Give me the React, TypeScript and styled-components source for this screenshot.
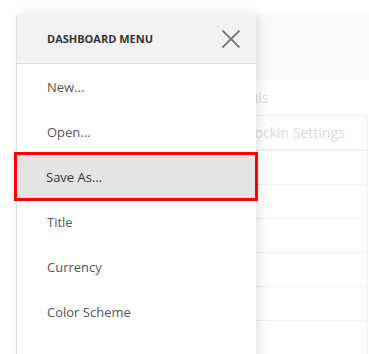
import React from 'react';
import styled, { createGlobalStyle } from 'styled-components';

const GlobalStyle = createGlobalStyle`
  html, body {
    margin: 0;
    padding: 0;
    background: #fff;
    font-family: 'Open Sans', 'Noto Sans', sans-serif;
  }
`;

const Page = styled.div`
  position: relative;
  width: 369px;
  height: 354px;
  overflow: hidden;
  padding-top: 14px;
  box-sizing: border-box;
`;

const Backdrop = styled.div`
  display: flex;
  flex-direction: column;
  padding-left: 120px;
`;

const TopBar = styled.div`
  height: 66px;
  background: #f9f9f9;
`;

const SectionLabel = styled.div`
  height: 35px;
  display: flex;
  align-items: center;
  font-size: 14px;
  color: #d9d9d9;
  padding-left: 104px;
`;

const Grid = styled.div`
  border-top: 1px solid #f0f0f0;
  border-right: 1px solid #f0f0f0;
  margin-right: 1px;
`;

const GridRow = styled.div<{ $head?: boolean }>`
  height: 33px;
  border-bottom: ${({ $head }) => ($head ? '2px' : '1px')} solid #f0f0f0;
  display: flex;
  align-items: center;
  font-size: 14px;
  color: #d9d9d9;
  padding-left: 122px;
  white-space: nowrap;
`;

const Menu = styled.div`
  position: absolute;
  left: 16px;
  top: 14px;
  width: 239px;
  height: 360px;
  background: #fff;
  border-left: 1px solid #ddd;
  border-top-left-radius: 4px;
  border-top-right-radius: 4px;
  box-shadow: 3px 0 10px rgba(0, 0, 0, 0.1);
`;

const MenuHeader = styled.div`
  height: 49px;
  background: #f2f2f2;
  border-bottom: 1px solid #ddd;
  border-top-left-radius: 4px;
  border-top-right-radius: 4px;
  display: flex;
  align-items: center;
  justify-content: space-between;
  padding: 0 14px 0 30px;
`;

const MenuTitle = styled.span`
  font-size: 11px;
  font-weight: 700;
  color: #333;
`;

const CloseButton = styled.button`
  border: 0;
  background: none;
  padding: 0;
  width: 22px;
  height: 20px;
  display: flex;
  align-items: center;
  justify-content: center;
  cursor: pointer;
`;

const MenuList = styled.ul`
  list-style: none;
  margin: 0;
  padding: 0;
`;

const MenuItem = styled.li<{ $active?: boolean }>`
  height: 45px;
  display: flex;
  align-items: center;
  padding-left: 30px;
  font-size: 13px;
  color: ${({ $active }) => ($active ? '#333' : '#555')};
  background: ${({ $active }) => ($active ? '#e4e4e4' : 'transparent')};
  outline: ${({ $active }) => ($active ? '3px solid #ff0000' : 'none')};
  outline-offset: -1px;
  margin-left: ${({ $active }) => ($active ? '-1px' : '0')};
  position: relative;
`;

const items = ['New...', 'Open...', 'Save As...', 'Title', 'Currency', 'Color Scheme'];

const App = () => (
  <>
    <GlobalStyle />
    <Page>
      <Backdrop>
        <TopBar />
        <SectionLabel>Details</SectionLabel>
        <Grid>
          <GridRow $head>Blockin Settings</GridRow>
          <GridRow />
          <GridRow />
          <GridRow />
          <GridRow />
          <GridRow />
          <GridRow />
        </Grid>
      </Backdrop>
      <Menu>
        <MenuHeader>
          <MenuTitle>DASHBOARD MENU</MenuTitle>
          <CloseButton aria-label="Close">
            <svg width="20" height="18" viewBox="0 0 20 18">
              <path d="M1.5 0.5 L18.5 17.5 M18.5 0.5 L1.5 17.5" stroke="#777" strokeWidth="1.8" fill="none" />
            </svg>
          </CloseButton>
        </MenuHeader>
        <MenuList>
          {items.map((item) => (
            <MenuItem key={item} $active={item === 'Save As...'}>
              {item}
            </MenuItem>
          ))}
        </MenuList>
      </Menu>
    </Page>
  </>
);

export default App;
